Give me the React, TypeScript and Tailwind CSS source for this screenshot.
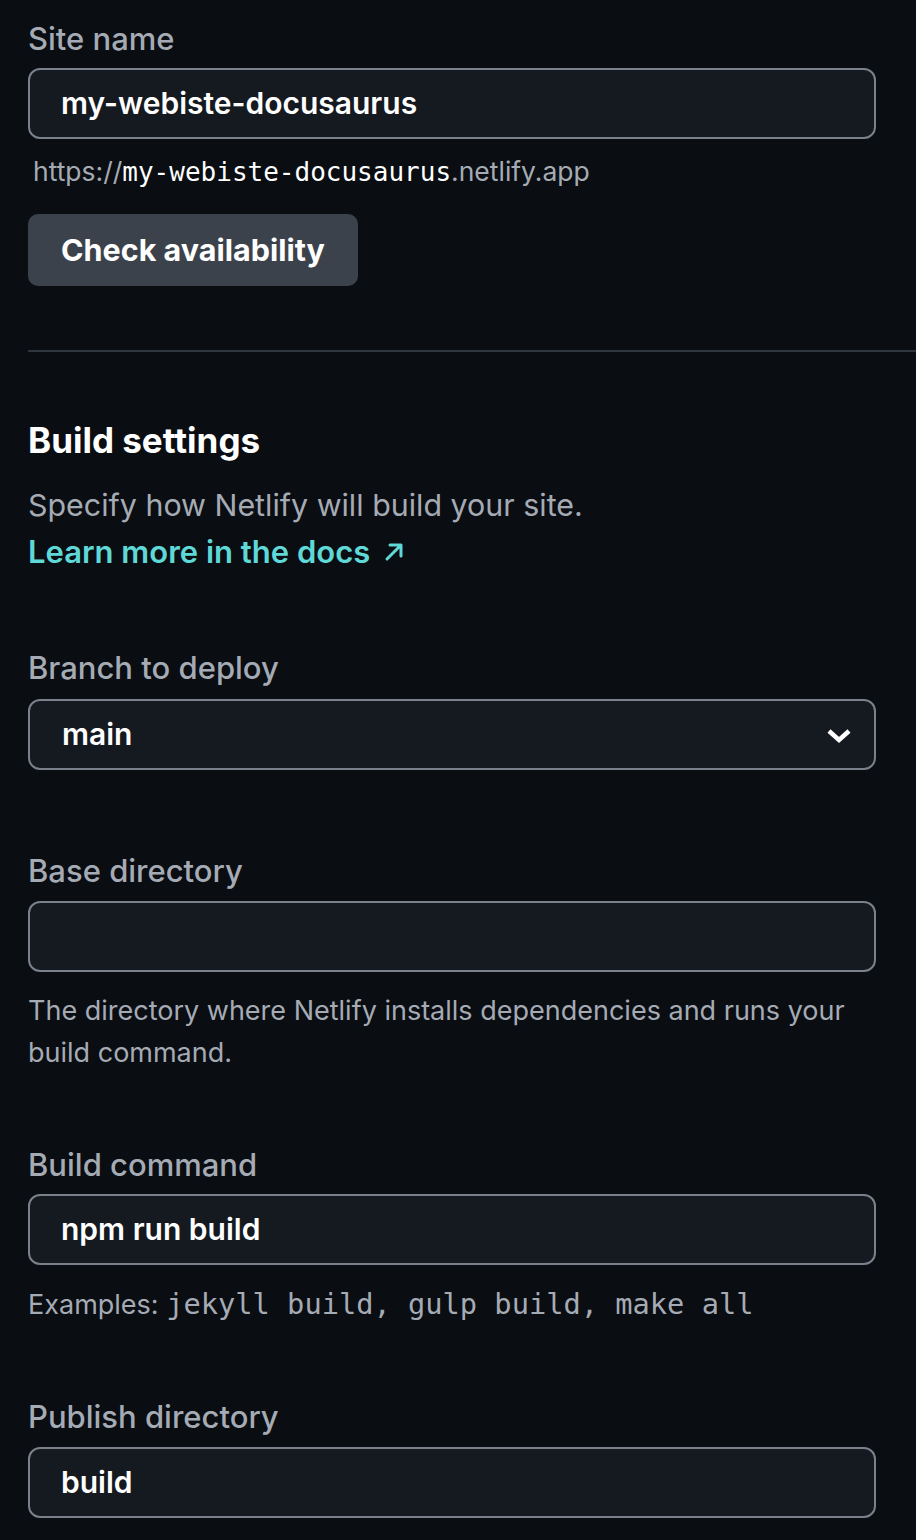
const sans = "font-['Inter','Noto_Sans',sans-serif]"
const mono = "font-['DejaVu_Sans_Mono','Liberation_Mono',monospace]"

function Label({ children, className = '' }: { children: React.ReactNode; className?: string }) {
  return (
    <div className={`text-[31px] leading-[40px] font-medium text-[#a5abb4] ${className}`}>
      {children}
    </div>
  )
}

function Field({ value, className = '' }: { value?: string; className?: string }) {
  return (
    <div
      className={`h-[71px] rounded-[12px] border-2 border-[#7b818a] bg-[#151920] px-[31px] flex items-center text-[30px] font-semibold text-white ${className}`}
    >
      {value}
    </div>
  )
}

export default function App() {
  return (
    <div className={`min-h-screen bg-[#0a0d12] pt-[19px] pb-[40px] ${sans}`}>
      <div className="pl-[28px] w-[876px]">
        <Label>Site name</Label>
        <Field value="my-webiste-docusaurus" className="mt-[9px]" />
        <div className="mt-[14px] pl-[5px] text-[26.5px] leading-[36px] text-[#a5abb4]">
          https://
          <span className={`${mono} text-[26px] font-normal text-white`}>my-webiste-docusaurus</span>
          .netlify.app
        </div>
        <button className="mt-[24px] h-[72px] rounded-[10px] bg-[#3b424b] px-[33px] text-[30.5px] font-bold text-white">
          Check availability
        </button>
      </div>

      <div className="mt-[64px] ml-[28px] h-[2px] bg-[#30363d]" />

      <div className="pl-[28px] w-[876px]">
        <h2 className="mt-[66px] text-[35px] leading-[44px] font-bold text-white">Build settings</h2>
        <p className="mt-[20px] text-[30.4px] leading-[46px] text-[#a5abb4]">
          Specify how Netlify will build your site.
        </p>
        <a className="flex items-center gap-[13px] text-[31px] leading-[47px] font-semibold text-[#5fd9d7]">
          Learn more in the docs
          <svg width="22" height="22" viewBox="0 0 22 22" fill="none">
            <path d="M4 18L18 4M7 4h11v11" stroke="#5fd9d7" strokeWidth="3" strokeLinecap="round" strokeLinejoin="round" />
          </svg>
        </a>

        <Label className="mt-[73px]">Branch to deploy</Label>
        <div className="mt-[11px] h-[71px] rounded-[12px] border-2 border-[#7b818a] bg-[#151920] pl-[32px] pr-[22px] flex items-center justify-between text-[30px] font-semibold text-white">
          main
          <svg width="26" height="18" viewBox="0 0 26 18" fill="none">
            <path d="M3 5l10 9 10-9" stroke="white" strokeWidth="4.5" />
          </svg>
        </div>

        <Label className="mt-[81px]">Base directory</Label>
        <Field className="mt-[10px]" />
        <p className="mt-[18px] text-[27px] leading-[42px] text-[#a5abb4]">
          The directory where Netlify installs dependencies and runs your build command.
        </p>

        <Label className="mt-[71px]">Build command</Label>
        <Field value="npm run build" className="mt-[9px]" />
        <div className="mt-[21px] text-[27px] leading-[36px] text-[#a5abb4]">
          Examples: <span className={`${mono} text-[28.7px]`}>jekyll build, gulp build, make all</span>
        </div>

        <Label className="mt-[74px]">Publish directory</Label>
        <Field value="build" className="mt-[10px]" />
      </div>
    </div>
  )
}
